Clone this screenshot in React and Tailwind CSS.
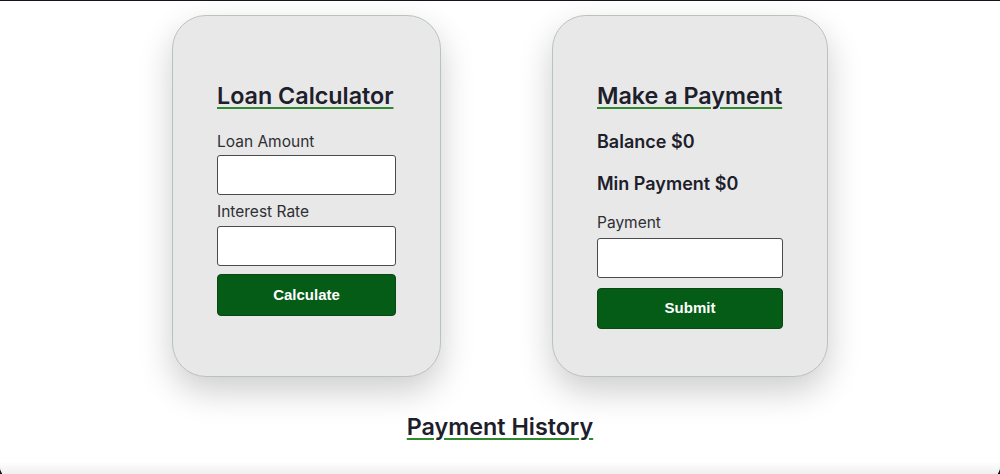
import React, { useState } from "react";

const headingCls =
  "text-[23.3px] leading-[32px] font-semibold text-[#1d202b] underline decoration-[#2f8a2f] decoration-2 underline-offset-[3px] whitespace-nowrap";
const labelCls = "text-[15.5px] leading-5 text-[#2f2f33]";
const inputCls =
  "w-full h-[40px] bg-white border border-[#4b4b4b] rounded-[3px] px-2 outline-none";
const buttonCls =
  "w-full bg-[#055c16] border border-[#0b4712] rounded-[4px] text-white font-bold text-[15px] font-['Liberation_Sans',Arial,sans-serif]";
const cardCls =
  "bg-[#e8e8e8] border border-[#b9c4b9] rounded-[34px] px-[44px] pt-[64px] pb-[47px] shadow-[0_14px_34px_rgba(0,0,0,0.2)] flex flex-col";

function LoanCalculator() {
  const [amount, setAmount] = useState("");
  const [rate, setRate] = useState("");

  return (
    <div className={cardCls + " w-[269px]"}>
      <h2 className={headingCls}>Loan Calculator</h2>
      <label className={labelCls + " mt-[20px]"}>Loan Amount</label>
      <input className={inputCls + " mt-[3px]"} value={amount} onChange={(e) => setAmount(e.target.value)} />
      <label className={labelCls + " mt-[7px]"}>Interest Rate</label>
      <input className={inputCls + " mt-[4px]"} value={rate} onChange={(e) => setRate(e.target.value)} />
      <button className={buttonCls + " h-[42px] mt-[8px]"}>Calculate</button>
    </div>
  );
}

function MakePayment() {
  const [payment, setPayment] = useState("");

  return (
    <div className={cardCls + " w-[276px]"}>
      <h2 className={headingCls}>Make a Payment</h2>
      <p className="text-[18px] leading-6 font-semibold text-[#1d202b] mt-[18px]">Balance $0</p>
      <p className="text-[18px] leading-6 font-semibold text-[#1d202b] mt-[18px]">Min Payment $0</p>
      <label className={labelCls + " mt-[17px]"}>Payment</label>
      <input className={inputCls + " mt-[5px]"} value={payment} onChange={(e) => setPayment(e.target.value)} />
      <button className={buttonCls + " h-[41px] mt-[10px]"}>Submit</button>
    </div>
  );
}

export default function App() {
  return (
    <div className="h-[480px] bg-[#14141e] pt-px overflow-hidden font-['Inter','Noto_Sans',sans-serif]">
      <div className="h-full bg-white rounded-b-[14px] flex flex-col items-center overflow-hidden">
        {/* cards */}
        <div className="flex items-stretch gap-[111px] pt-[14px]">
          <LoanCalculator />
          <MakePayment />
        </div>

        {/* history */}
        <h2 className={headingCls + " mt-[34px]"}>Payment History</h2>

        <div className="flex-1 w-full bg-linear-to-b from-white from-50% to-[#e8e8e8]" />
      </div>
    </div>
  );
}
